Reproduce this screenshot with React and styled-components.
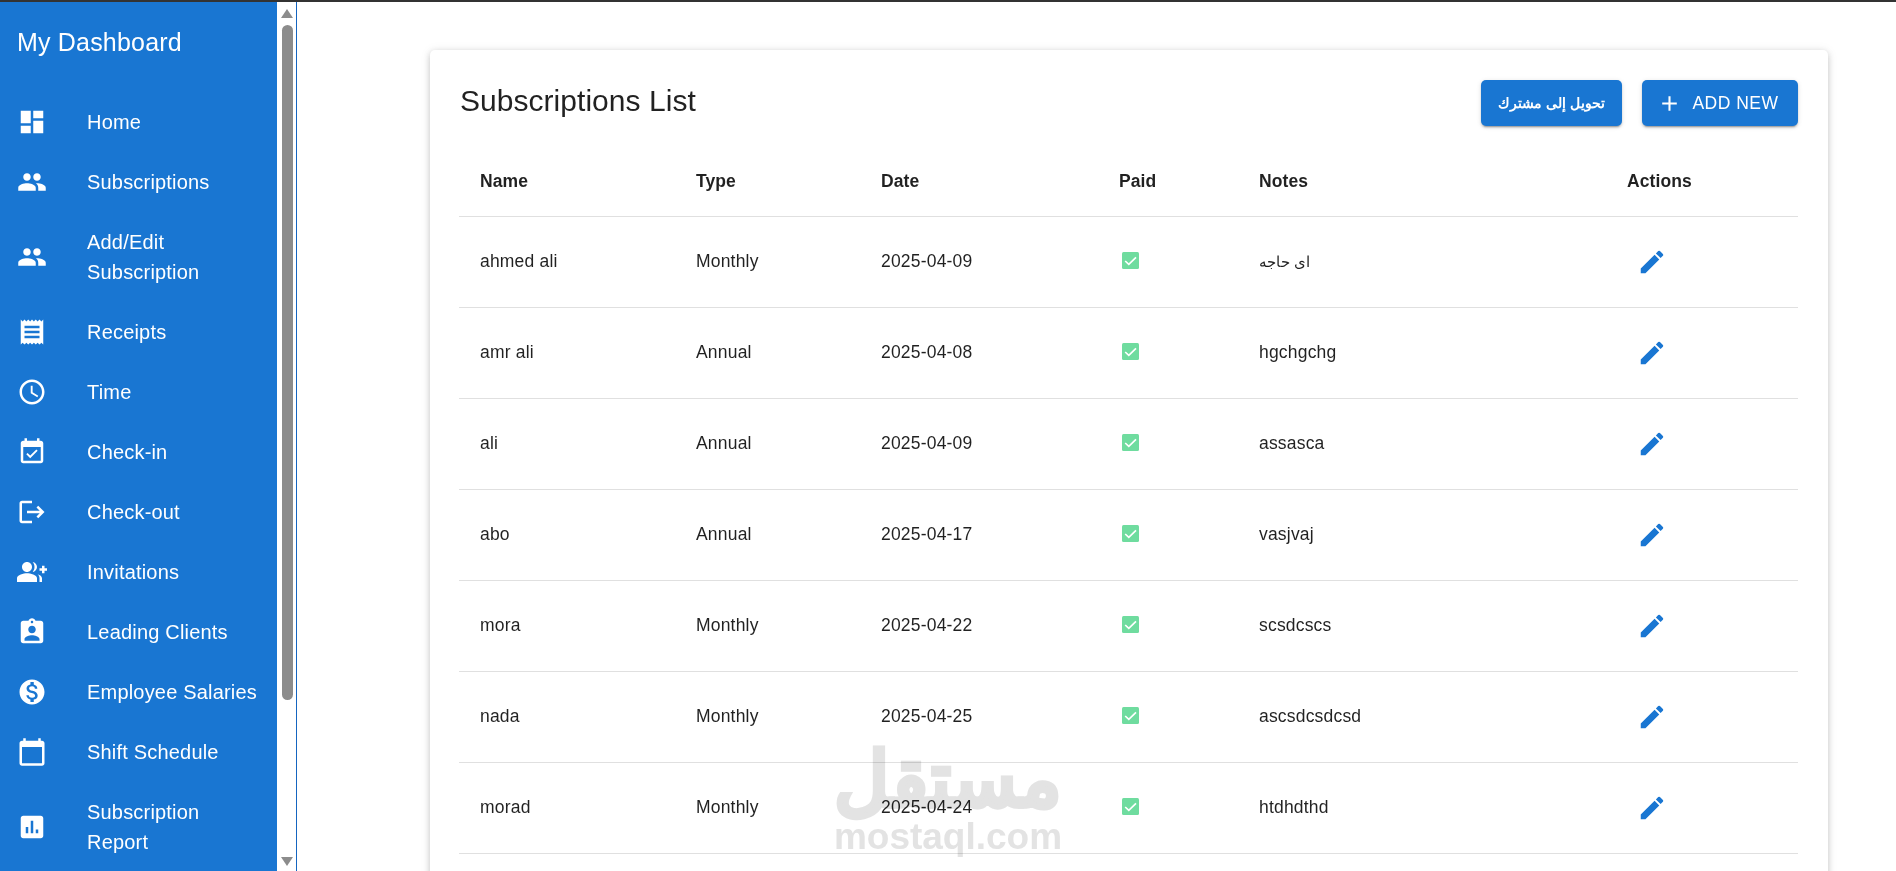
import styled, { createGlobalStyle } from 'styled-components';

const GlobalStyle = createGlobalStyle`
  html, body {
    margin: 0;
    padding: 0;
    height: 100%;
    overflow: hidden;
    background: #fff;
  }
  * { box-sizing: border-box; }
`;

const Page = styled.div`
  position: relative;
  height: 100vh;
  display: flex;
  overflow: hidden;
  border-top: 2px solid #333;
  font-family: "Liberation Sans", Arial, sans-serif;
  color: rgba(0, 0, 0, 0.87);
`;

const SideFrame = styled.aside`
  flex: 0 0 297px;
  height: 100%;
  display: flex;
  border-right: 1px solid #1565c0;
  overflow: hidden;
`;

const Sidebar = styled.nav`
  flex: 0 0 277px;
  background: #1976d2;
  color: #fff;
  overflow: hidden;
`;

const Logo = styled.div`
  height: 87px;
  padding: 25px 17px 0;
  font-size: 25px;
  line-height: 30px;
  letter-spacing: 0.19px;
  margin-bottom: 3px;
`;

const NavItem = styled.div`
  display: flex;
  align-items: center;
  padding: 15px 17px;
`;

const NavIcon = styled.svg`
  flex: 0 0 30px;
  width: 30px;
  height: 30px;
  margin-right: 40px;
  fill: #fff;
`;

const NavText = styled.span`
  font-size: 20px;
  line-height: 30px;
  letter-spacing: 0.19px;
`;

const ScrollTrack = styled.div`
  flex: 1;
  display: flex;
  flex-direction: column;
  align-items: center;
  padding: 7px 3px 5px 4px;
  background: #fff;
`;

const ScrollThumb = styled.div`
  width: 11px;
  height: 675px;
  margin: 7px 0 auto;
  background: #8c8c8c;
  border-radius: 6px;
`;

const ScrollArrow = styled.div`
  width: 0;
  height: 0;
  border-left: 6.5px solid transparent;
  border-right: 6.5px solid transparent;
  border-bottom: ${p => (p.$down ? 'none' : '9px solid #8c8c8c')};
  border-top: ${p => (p.$down ? '9px solid #8c8c8c' : 'none')};
`;

const Main = styled.main`
  flex: 1;
  padding: 48px 68px 0 133px;
`;

const Card = styled.section`
  background: #fff;
  border-radius: 5px;
  padding: 30px 30px 40px 29px;
  box-shadow: 0 2px 6px rgba(0, 0, 0, 0.18), 0 1px 12px rgba(0, 0, 0, 0.08);
`;

const CardHeader = styled.header`
  display: flex;
  justify-content: space-between;
  align-items: center;
  margin-bottom: 16px;
`;

const Title = styled.h1`
  margin: -5px 0 0 1px;
  font-size: 30px;
  line-height: 1.2;
  font-weight: 400;
  letter-spacing: 0.04px;
`;

const Actions = styled.div`
  display: flex;
  gap: 20px;
`;

const Button = styled.button`
  display: inline-flex;
  align-items: center;
  justify-content: center;
  gap: 10px;
  width: ${p => p.$width}px;
  height: 46px;
  padding: ${p => (p.$arabic ? '0' : '0 4px 0 0')};
  border: 0;
  border-radius: 5px;
  background: #1976d2;
  color: #fff;
  font-family: inherit;
  font-size: ${p => (p.$arabic ? 13.5 : 17.5)}px;
  font-weight: ${p => (p.$arabic ? 700 : 400)};
  letter-spacing: ${p => (p.$arabic ? 0 : 0.5)}px;
  box-shadow: 0 3px 1px -2px rgba(0, 0, 0, 0.2), 0 2px 2px 0 rgba(0, 0, 0, 0.14), 0 1px 5px 0 rgba(0, 0, 0, 0.12);
`;

const PlusIcon = styled.svg`
  width: 25px;
  height: 25px;
  fill: #fff;
`;

const Table = styled.table`
  width: 1339px;
  border-collapse: collapse;
  table-layout: fixed;
  font-size: 17.5px;
  letter-spacing: 0.19px;
`;

const HeadCell = styled.th`
  height: 74px;
  padding: 5px 20px 0 21px;
  text-align: left;
  font-weight: 700;
  letter-spacing: 0.1px;
  border-bottom: 1px solid #e0e0e0;
`;

const Cell = styled.td`
  height: 91px;
  padding: 0 20px 0 21px;
  border-bottom: 1px solid #e0e0e0;
`;

const ArabicNote = styled.span`
  font-size: 14.5px;
  letter-spacing: 0;
`;

const CheckIcon = styled.svg`
  display: block;
  width: 17px;
  height: 17px;
  margin: -2px 0 0 3px;
`;

const EditIcon = styled.svg`
  display: block;
  width: 30px;
  height: 30px;
  margin-left: 10px;
  fill: #1976d2;
`;

const Watermark = styled.div`
  position: absolute;
  left: 828px;
  top: 738px;
  width: 240px;
  text-align: center;
  font-weight: 700;
  color: #e3e3e3;
  mix-blend-mode: multiply;
  pointer-events: none;
`;

const WatermarkArabic = styled.div`
  font-size: 76px;
  line-height: 80px;
  -webkit-text-stroke: 3px #e3e3e3;
`;

const WatermarkLatin = styled.div`
  font-size: 37px;
  line-height: 34px;
`;

const ICONS = {
  dashboard: 'M3 13h8V3H3v10zm0 8h8v-6H3v6zm10 0h8V11h-8v10zm0-18v6h8V3h-8z',
  people: 'M16 11c1.66 0 2.99-1.34 2.99-3S17.66 5 16 5c-1.66 0-3 1.34-3 3s1.34 3 3 3zm-8 0c1.66 0 2.99-1.34 2.99-3S9.66 5 8 5C6.34 5 5 6.34 5 8s1.34 3 3 3zm0 2c-2.33 0-7 1.17-7 3.5V19h14v-2.5c0-2.33-4.67-3.5-7-3.5zm8 0c-.29 0-.62.02-.97.05 1.16.84 1.97 1.97 1.97 3.45V19h6v-2.5c0-2.33-4.67-3.5-7-3.5z',
  receipt: 'M18 17H6v-2h12v2zm0-4H6v-2h12v2zm0-4H6V7h12v2zM3 22l1.5-1.5L6 22l1.5-1.5L9 22l1.5-1.5L12 22l1.5-1.5L15 22l1.5-1.5L18 22l1.5-1.5L21 22V2l-1.5 1.5L18 2l-1.5 1.5L15 2l-1.5 1.5L12 2l-1.5 1.5L9 2 7.5 3.5 6 2 4.5 3.5 3 2v20z',
  time: 'M11.99 2C6.47 2 2 6.48 2 12s4.47 10 9.99 10C17.52 22 22 17.52 22 12S17.52 2 11.99 2zM12 20c-4.42 0-8-3.58-8-8s3.58-8 8-8 8 3.58 8 8-3.58 8-8 8zM12.5 7H11v6l5.25 3.15.75-1.23-4.5-2.67z',
  eventAvailable: 'M16.53 11.06 15.47 10l-4.88 4.88-2.12-2.12-1.06 1.06L10.59 17l5.94-5.94zM19 3h-1V1h-2v2H8V1H6v2H5c-1.11 0-1.99.9-1.99 2L3 19c0 1.1.89 2 2 2h14c1.1 0 2-.9 2-2V5c0-1.1-.9-2-2-2zm0 16H5V8h14v11z',
  logout: 'm17 7-1.41 1.41L18.17 11H8v2h10.17l-2.58 2.58L17 17l5-5zM4 5h8V3H4c-1.1 0-2 .9-2 2v14c0 1.1.9 2 2 2h8v-2H4V5z',
  groupAdd: 'M22 9V7h-2v2h-2v2h2v2h2v-2h2V9h-2zM8 12c2.21 0 4-1.79 4-4s-1.79-4-4-4-4 1.79-4 4 1.79 4 4 4zm0 1c-2.67 0-8 1.34-8 4v3h16v-3c0-2.66-5.33-4-8-4zm4.51-8.95C13.43 5.11 14 6.49 14 8s-.57 2.89-1.49 3.95C14.47 11.7 16 10.04 16 8s-1.53-3.7-3.49-3.95zm4.02 9.78C17.42 14.66 18 15.7 18 17v3h2v-3c0-1.45-1.59-2.51-3.47-3.17z',
  assignment: 'M19 3h-4.18C14.4 1.84 13.3 1 12 1c-1.3 0-2.4.84-2.82 2H5c-1.1 0-2 .9-2 2v14c0 1.1.9 2 2 2h14c1.1 0 2-.9 2-2V5c0-1.1-.9-2-2-2zm-7 0c.55 0 1 .45 1 1s-.45 1-1 1-1-.45-1-1 .45-1 1-1zm0 4c1.66 0 3 1.34 3 3s-1.34 3-3 3-3-1.34-3-3 1.34-3 3-3zm6 12H6v-1.4c0-2 4-3.1 6-3.1s6 1.1 6 3.1V19z',
  money: 'M12 2C6.48 2 2 6.48 2 12s4.48 10 10 10 10-4.48 10-10S17.52 2 12 2zm1.41 16.09V20h-2.67v-1.93c-1.71-.36-3.16-1.46-3.27-3.4h1.96c.1 1.05.82 1.87 2.65 1.87 1.96 0 2.4-.98 2.4-1.59 0-.83-.44-1.61-2.67-2.14-2.48-.6-4.18-1.62-4.18-3.67 0-1.72 1.39-2.84 3.11-3.21V4h2.67v1.95c1.86.45 2.79 1.86 2.85 3.39H14.3c-.05-1.11-.64-1.87-2.22-1.87-1.5 0-2.4.68-2.4 1.64 0 .84.65 1.39 2.67 1.91s4.18 1.39 4.18 3.91c-.01 1.83-1.38 2.83-3.12 3.16z',
  calendar: 'M20 3h-1V1h-2v2H7V1H5v2H4c-1.1 0-2 .9-2 2v16c0 1.1.9 2 2 2h16c1.1 0 2-.9 2-2V5c0-1.1-.9-2-2-2zm0 18H4V8h16v13z',
  assessment: 'M19 3H5c-1.1 0-2 .9-2 2v14c0 1.1.9 2 2 2h14c1.1 0 2-.9 2-2V5c0-1.1-.9-2-2-2zM9 17H7v-5h2v5zm4 0h-2V7h2v10zm4 0h-2v-3h2v3z',
};

const EDIT_PATH = 'M3 17.25V21h3.75L17.81 9.94l-3.75-3.75L3 17.25zM20.71 7.04c.39-.39.39-1.02 0-1.41l-2.34-2.34a.9959.9959 0 0 0-1.41 0l-1.83 1.83 3.75 3.75 1.83-1.83z';

const NAV = [
  ['dashboard', 'Home'],
  ['people', 'Subscriptions'],
  ['people', 'Add/Edit Subscription'],
  ['receipt', 'Receipts'],
  ['time', 'Time'],
  ['eventAvailable', 'Check-in'],
  ['logout', 'Check-out'],
  ['groupAdd', 'Invitations'],
  ['assignment', 'Leading Clients'],
  ['money', 'Employee Salaries'],
  ['calendar', 'Shift Schedule'],
  ['assessment', 'Subscription Report'],
];

const COLUMNS = [
  ['Name', 216],
  ['Type', 185],
  ['Date', 238],
  ['Paid', 140],
  ['Notes', 368],
  ['Actions', 192],
];

const ROWS = [
  ['ahmed ali', 'Monthly', '2025-04-09', 'اى حاجه'],
  ['amr ali', 'Annual', '2025-04-08', 'hgchgchg'],
  ['ali', 'Annual', '2025-04-09', 'assasca'],
  ['abo', 'Annual', '2025-04-17', 'vasjvaj'],
  ['mora', 'Monthly', '2025-04-22', 'scsdcscs'],
  ['nada', 'Monthly', '2025-04-25', 'ascsdcsdcsd'],
  ['morad', 'Monthly', '2025-04-24', 'htdhdthd'],
];

const hasArabic = text => /[\u0600-\u06FF]/.test(text);

const PaidMark = () => (
  <CheckIcon viewBox="0 0 17 17">
    <rect width="17" height="17" rx="1.5" fill="#6fdc9f" />
    <path d="M3.2 9l3.6 3.4L14 5.4" fill="none" stroke="#fff" strokeWidth="1.7" />
  </CheckIcon>
);

export default function App() {
  return (
    <>
      <GlobalStyle />
      <Page>
        <SideFrame>
          <Sidebar>
            <Logo>My Dashboard</Logo>
            {NAV.map(([icon, label]) => (
              <NavItem key={label}>
                <NavIcon viewBox="0 0 24 24"><path d={ICONS[icon]} /></NavIcon>
                <NavText>{label}</NavText>
              </NavItem>
            ))}
          </Sidebar>
          <ScrollTrack>
            <ScrollArrow />
            <ScrollThumb />
            <ScrollArrow $down />
          </ScrollTrack>
        </SideFrame>
        <Main>
          <Card>
            <CardHeader>
              <Title>Subscriptions List</Title>
              <Actions>
                <Button $width={141} $arabic>تحويل إلى مشترك</Button>
                <Button $width={156}>
                  <PlusIcon viewBox="0 0 24 24"><path d="M19 13h-6v6h-2v-6H5v-2h6V5h2v6h6v2z" /></PlusIcon>
                  ADD NEW
                </Button>
              </Actions>
            </CardHeader>
            <Table>
              <colgroup>
                {COLUMNS.map(([name, width]) => <col key={name} width={width} />)}
              </colgroup>
              <thead>
                <tr>
                  {COLUMNS.map(([name]) => <HeadCell key={name}>{name}</HeadCell>)}
                </tr>
              </thead>
              <tbody>
                {ROWS.map(([name, type, date, notes]) => (
                  <tr key={name}>
                    <Cell>{name}</Cell>
                    <Cell>{type}</Cell>
                    <Cell>{date}</Cell>
                    <Cell><PaidMark /></Cell>
                    <Cell>{hasArabic(notes) ? <ArabicNote>{notes}</ArabicNote> : notes}</Cell>
                    <Cell>
                      <EditIcon viewBox="0 0 24 24"><path d={EDIT_PATH} /></EditIcon>
                    </Cell>
                  </tr>
                ))}
              </tbody>
            </Table>
          </Card>
        </Main>
        <Watermark>
          <WatermarkArabic>مستقل</WatermarkArabic>
          <WatermarkLatin>mostaql.com</WatermarkLatin>
        </Watermark>
      </Page>
    </>
  );
}
